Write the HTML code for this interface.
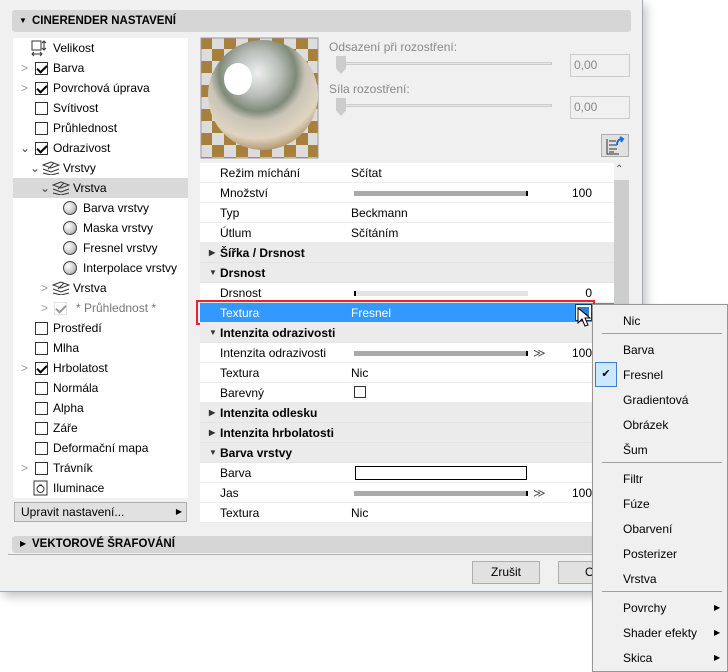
<!DOCTYPE html>
<html><head><meta charset="utf-8"><style>
*{box-sizing:border-box;margin:0;padding:0}
body{width:728px;height:672px;background:#fff;font-family:"Liberation Sans",sans-serif;font-size:12px;color:#000;position:relative;overflow:hidden}
.a{position:absolute}
.dlg{left:0;top:0;width:643px;height:592px;background:#f0f0f0;border-right:1px solid #9ab;border-bottom:1px solid #9ab;box-shadow:3px 4px 10px rgba(0,0,0,.25)}
.hdr{background:#d6d6d6;border-radius:3px;font-weight:bold;font-size:11.5px;line-height:22px}
.tr{height:20px;line-height:20px;white-space:nowrap}
.cb{position:absolute;width:13px;height:13px;border:1px solid #333;background:#fff;top:4px}
.cb.k::after{content:"";position:absolute;left:3px;top:0px;width:4px;height:8px;border:solid #000;border-width:0 2px 2px 0;transform:rotate(45deg)}
.chev{position:absolute;top:0;color:#999;font-size:12px}
.sp{position:absolute;top:3px;width:14px;height:14px;border-radius:50%;border:1px solid #444;background:radial-gradient(circle at 35% 35%,#fff,#ccc 55%,#888)}
.pr{position:absolute;left:200px;width:414px;height:20px;line-height:20px;background:#fff;border-bottom:1px solid #ececec}
.pr.h{background:#ebebeb;font-weight:bold;border-bottom:1px solid #e4e4e4}
.pr .l{position:absolute;left:20px}
.pr .v{position:absolute;left:151px}
.pr .n{position:absolute;right:22px}
.sl{position:absolute;left:154px;top:8px;width:174px;height:5px;background:#aaa;border-right:2px solid #000}
.sl.e{background:#e3e3e3;border-right:none;border-left:2px solid #000}
.tri{position:absolute;left:9px;font-size:8px;color:#333}
.mi{position:absolute;left:623px;line-height:16px}
.sep{position:absolute;left:602px;width:120px;height:1px;background:#a0a0a0}
.ar{position:absolute;left:714px;font-size:8px}
</style></head><body>
<div class="a dlg"></div>
<div class="a hdr" style="left:12px;top:10px;width:619px;height:22px;padding-left:20px">CINERENDER NASTAVENÍ</div>
<div class="a" style="left:19px;top:16px;font-size:8px">▼</div>

<div class="a" style="left:13px;top:38px;width:175px;height:460px;background:#fff"></div>
<div class="a" style="left:13px;top:178px;width:175px;height:20px;background:#d9d9d9"></div>
<div class="a" style="left:13px;top:38px;width:175px">
<div class="tr" style="position:relative"><svg class="a" style="left:18px;top:2px" width="16" height="17"><rect x="1" y="1" width="9" height="9" fill="none" stroke="#333"/><path d="M13 1v9M11 3l2-2 2 2M11 8l2 2 2-2M1 14h10M3 12l-2 2 2 2M9 12l2 2-2 2" stroke="#333" fill="none"/></svg><span class="a" style="left:40px">Velikost</span></div>
<div class="tr" style="position:relative"><span class="chev" style="left:8px">&gt;</span><span class="cb k" style="left:22px"></span><span class="a" style="left:40px">Barva</span></div>
<div class="tr" style="position:relative"><span class="chev" style="left:8px">&gt;</span><span class="cb k" style="left:22px"></span><span class="a" style="left:40px">Povrchová úprava</span></div>
<div class="tr" style="position:relative"><span class="cb" style="left:22px"></span><span class="a" style="left:40px">Svítivost</span></div>
<div class="tr" style="position:relative"><span class="cb" style="left:22px"></span><span class="a" style="left:40px">Průhlednost</span></div>
<div class="tr" style="position:relative"><span class="chev" style="left:7px;color:#444">⌄</span><span class="cb k" style="left:22px"></span><span class="a" style="left:40px">Odrazivost</span></div>
<div class="tr" style="position:relative"><span class="chev" style="left:17px;color:#444">⌄</span><svg class="a" style="left:29px;top:3px" width="18" height="14"><path d="M1 4l8-3 8 3-8 3zM1 8l8 3 8-3M1 12l8 2 8-2M12 2l-6 6" stroke="#333" fill="none"/></svg><span class="a" style="left:50px">Vrstvy</span></div>
<div class="tr" style="position:relative"><span class="chev" style="left:27px;color:#444">⌄</span><svg class="a" style="left:39px;top:3px" width="18" height="14"><path d="M1 4l8-3 8 3-8 3zM1 8l8 3 8-3M1 12l8 2 8-2M12 2l-6 6" stroke="#333" fill="none"/></svg><span class="a" style="left:60px">Vrstva</span></div>
<div class="tr" style="position:relative"><span class="sp" style="left:50px"></span><span class="a" style="left:70px">Barva vrstvy</span></div>
<div class="tr" style="position:relative"><span class="sp" style="left:50px"></span><span class="a" style="left:70px">Maska vrstvy</span></div>
<div class="tr" style="position:relative"><span class="sp" style="left:50px"></span><span class="a" style="left:70px">Fresnel vrstvy</span></div>
<div class="tr" style="position:relative"><span class="sp" style="left:50px"></span><span class="a" style="left:70px">Interpolace vrstvy</span></div>
<div class="tr" style="position:relative"><span class="chev" style="left:28px">&gt;</span><svg class="a" style="left:39px;top:3px" width="18" height="14"><path d="M1 4l8-3 8 3-8 3zM1 8l8 3 8-3M1 12l8 2 8-2M12 2l-6 6" stroke="#333" fill="none"/></svg><span class="a" style="left:60px">Vrstva</span></div>
<div class="tr" style="position:relative;color:#777"><span class="chev" style="left:28px">&gt;</span><span class="cb k" style="left:41px;border-color:#bbb;opacity:.4"></span><span class="a" style="left:63px">* Průhlednost *</span></div>
<div class="tr" style="position:relative"><span class="cb" style="left:22px"></span><span class="a" style="left:40px">Prostředí</span></div>
<div class="tr" style="position:relative"><span class="cb" style="left:22px"></span><span class="a" style="left:40px">Mlha</span></div>
<div class="tr" style="position:relative"><span class="chev" style="left:8px">&gt;</span><span class="cb k" style="left:22px"></span><span class="a" style="left:40px">Hrbolatost</span></div>
<div class="tr" style="position:relative"><span class="cb" style="left:22px"></span><span class="a" style="left:40px">Normála</span></div>
<div class="tr" style="position:relative"><span class="cb" style="left:22px"></span><span class="a" style="left:40px">Alpha</span></div>
<div class="tr" style="position:relative"><span class="cb" style="left:22px"></span><span class="a" style="left:40px">Záře</span></div>
<div class="tr" style="position:relative"><span class="cb" style="left:22px"></span><span class="a" style="left:40px">Deformační mapa</span></div>
<div class="tr" style="position:relative"><span class="chev" style="left:8px">&gt;</span><span class="cb" style="left:22px"></span><span class="a" style="left:40px">Trávník</span></div>
<div class="tr" style="position:relative"><svg class="a" style="left:20px;top:2px" width="16" height="16"><rect x="1" y="1" width="13" height="14" fill="none" stroke="#333"/><circle cx="7.5" cy="9" r="3.5" fill="none" stroke="#333"/><path d="M6 5h3" stroke="#333"/></svg><span class="a" style="left:40px">Iluminace</span></div>
</div>
<div class="a" style="left:14px;top:502px;width:173px;height:20px;background:#e1e1e1;border:1px solid #adadad;line-height:18px;padding-left:6px">Upravit nastavení...<span class="a" style="right:4px;font-size:8px">▶</span></div>

<svg class="a" style="left:200px;top:37px" width="120" height="122"><defs><radialGradient id="g" cx="45%" cy="30%" r="70%"><stop offset="0" stop-color="#eef0f0"/><stop offset=".3" stop-color="#b8bdb8"/><stop offset=".5" stop-color="#7f8a78"/><stop offset=".62" stop-color="#c9c4b8"/><stop offset=".85" stop-color="#e0d4c0"/><stop offset="1" stop-color="#b59a74"/></radialGradient><pattern id="c" width="24" height="24" patternUnits="userSpaceOnUse"><rect width="24" height="24" fill="#dcdcdc"/><rect width="12" height="12" fill="#a8803e"/><rect x="12" y="12" width="12" height="12" fill="#a8803e"/></pattern></defs><rect x="1" y="1" width="117" height="120" fill="url(#c)" stroke="#999"/><circle cx="63" cy="58" r="55" fill="url(#g)"/><ellipse cx="38" cy="42" rx="14" ry="16" fill="#fff"/></svg>

<div class="a" style="left:329px;top:40px;color:#888">Odsazení při rozostření:</div>
<div class="a" style="left:340px;top:62px;width:212px;height:3px;background:#e6e6e6;border:1px solid #ccc"></div>
<div class="a" style="left:336px;top:56px;width:10px;height:18px;background:#ccc;clip-path:polygon(0 0,100% 0,100% 70%,50% 100%,0 70%)"></div>
<div class="a" style="left:570px;top:54px;width:60px;height:23px;border:1px solid #ccc;line-height:21px;padding-left:3px;color:#888">0,00</div>
<div class="a" style="left:329px;top:82px;color:#888">Síla rozostření:</div>
<div class="a" style="left:340px;top:104px;width:212px;height:3px;background:#e6e6e6;border:1px solid #ccc"></div>
<div class="a" style="left:336px;top:98px;width:10px;height:18px;background:#ccc;clip-path:polygon(0 0,100% 0,100% 70%,50% 100%,0 70%)"></div>
<div class="a" style="left:570px;top:96px;width:60px;height:23px;border:1px solid #ccc;line-height:21px;padding-left:3px;color:#888">0,00</div>
<div class="a" style="left:601px;top:134px;width:28px;height:23px;background:#e1e1e1;border:1px solid #adadad"><svg width="26" height="21"><path d="M7 6h7M7 10h8M7 14h8M7 17h5M5 4v15h12" stroke="#333" fill="none"/><path d="M15 10c0-4 2-6 5-6M18 2l3 2-2 3" stroke="#1a6fd8" stroke-width="2" fill="none"/></svg></div>

<div class="pr" style="top:163px"><span class="l">Režim míchání</span><span class="v">Sčítat</span></div>
<div class="pr" style="top:183px"><span class="l">Množství</span><span class="sl"></span><span class="n">100</span></div>
<div class="pr" style="top:203px"><span class="l">Typ</span><span class="v">Beckmann</span></div>
<div class="pr" style="top:223px"><span class="l">Útlum</span><span class="v">Sčítáním</span></div>
<div class="pr h" style="top:243px"><span class="tri">▶</span><span class="l">Šířka / Drsnost</span></div>
<div class="pr h" style="top:263px"><span class="tri">▼</span><span class="l">Drsnost</span></div>
<div class="pr" style="top:283px"><span class="l">Drsnost</span><span class="sl e"></span><span class="n">0</span></div>
<div class="pr" style="top:303px;background:#3399ff;color:#fff"><span class="l">Textura</span><span class="v">Fresnel</span><span class="a" style="left:376px;top:2px;width:15px;height:15px;border:2px solid #fff;background:#2a80d6;outline:1px solid #003c80"></span><span class="a" style="left:381px;top:1px;color:#222;font-size:9px">▶</span></div>
<div class="a" style="left:196px;top:300px;width:399px;height:25px;border:2px solid #e8242c"></div>
<div class="pr h" style="top:323px"><span class="tri">▼</span><span class="l">Intenzita odrazivosti</span></div>
<div class="pr" style="top:343px"><span class="l">Intenzita odrazivosti</span><span class="sl"></span><span class="a" style="left:333px;color:#555">≫</span><span class="n">100</span></div>
<div class="pr" style="top:363px"><span class="l">Textura</span><span class="v">Nic</span></div>
<div class="pr" style="top:383px"><span class="l">Barevný</span><span class="cb" style="left:154px;top:3px;width:12px;height:12px"></span></div>
<div class="pr h" style="top:403px"><span class="tri">▶</span><span class="l">Intenzita odlesku</span></div>
<div class="pr h" style="top:423px"><span class="tri">▶</span><span class="l">Intenzita hrbolatosti</span></div>
<div class="pr h" style="top:443px"><span class="tri">▼</span><span class="l">Barva vrstvy</span></div>
<div class="pr" style="top:463px"><span class="l">Barva</span><span class="a" style="left:155px;top:3px;width:172px;height:14px;border:1px solid #000;background:#fff"></span></div>
<div class="pr" style="top:483px"><span class="l">Jas</span><span class="sl"></span><span class="a" style="left:333px;color:#555">≫</span><span class="n">100</span></div>
<div class="pr" style="top:503px"><span class="l">Textura</span><span class="v">Nic</span></div>
<div class="a" style="left:614px;top:163px;width:15px;height:360px;background:#f0f0f0"></div>
<div class="a" style="left:615px;top:164px;font-size:10px;color:#555">⌃</div>
<div class="a" style="left:614px;top:180px;width:15px;height:343px;background:#cdcdcd"></div>

<div class="a hdr" style="left:12px;top:536px;width:619px;height:17px;line-height:17px;padding-left:20px">VEKTOROVÉ ŠRAFOVÁNÍ</div>
<div class="a" style="left:20px;top:539px;font-size:8px">▶</div>
<div class="a" style="left:8px;top:554px;width:630px;height:1px;background:#b0b0b0"></div>
<div class="a" style="left:472px;top:561px;width:68px;height:23px;background:#e1e1e1;border:1px solid #adadad;text-align:center;line-height:21px">Zrušit</div>
<div class="a" style="left:558px;top:561px;width:68px;height:23px;background:#e1e1e1;border:1px solid #adadad;line-height:21px;padding-left:26px">OK</div>

<div class="a" style="left:592px;top:304px;width:136px;height:368px;background:#f0f0f0;border:1px solid #979797;box-shadow:2px 2px 4px rgba(0,0,0,.2)"></div>
<div class="a" style="left:595px;top:362px;width:22px;height:25px;background:#cce8ff;border:1px solid #3a7fd0;text-align:center;line-height:23px;font-size:11px">✔</div>
<div class="mi" style="top:313px">Nic</div>
<div class="sep" style="top:333px"></div>
<div class="mi" style="top:342px">Barva</div>
<div class="mi" style="top:367px">Fresnel</div>
<div class="mi" style="top:392px">Gradientová</div>
<div class="mi" style="top:417px">Obrázek</div>
<div class="mi" style="top:442px">Šum</div>
<div class="sep" style="top:462px"></div>
<div class="mi" style="top:471px">Filtr</div>
<div class="mi" style="top:496px">Fúze</div>
<div class="mi" style="top:521px">Obarvení</div>
<div class="mi" style="top:546px">Posterizer</div>
<div class="mi" style="top:571px">Vrstva</div>
<div class="sep" style="top:591px"></div>
<div class="mi" style="top:600px">Povrchy</div><div class="ar" style="top:603px">▶</div>
<div class="mi" style="top:625px">Shader efekty</div><div class="ar" style="top:628px">▶</div>
<div class="mi" style="top:650px">Skica</div><div class="ar" style="top:653px">▶</div>

<svg class="a" style="left:577px;top:307px" width="16" height="22"><path d="M1 1v15l4-4 3 7 3-1-3-7h5z" fill="#fff" stroke="#000"/></svg>
</body></html>
